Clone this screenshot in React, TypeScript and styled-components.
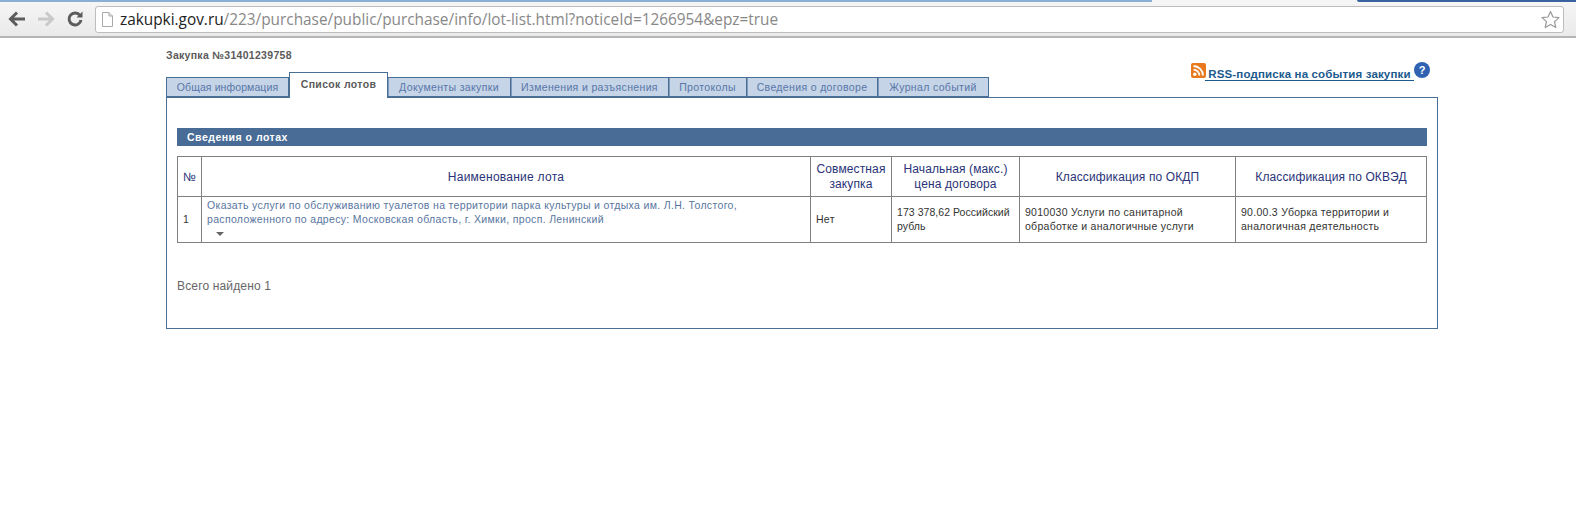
import React from 'react';
import styled, { createGlobalStyle } from 'styled-components';

const Global = createGlobalStyle`
  html, body { margin: 0; padding: 0; background: #fff; }
  body { font-family: "Liberation Sans", Arial, sans-serif; font-size: 12px; color: #555; }
`;

const Page = styled.div`
  width: 1576px;
  height: 529px;
  overflow: hidden;
  background: #fff;
`;

const BrowserChrome = styled.div`
  height: 38px;
  box-sizing: border-box;
  border-bottom: 2px solid #b5b5b5;
  background: linear-gradient(#f6f6f6, #eaeaea);
  display: flex;
  flex-direction: column;
`;

const TopStripe = styled.div`
  height: 2px;
  flex: none;
  display: flex;
  justify-content: space-between;
`;

const StripeTab = styled.div`
  width: 1152px;
  background: #8aaed6;
`;

const StripeActive = styled.div`
  width: 219px;
  background: #3a62a0;
  border-bottom-left-radius: 2px;
`;

const Toolbar = styled.div`
  flex: 1;
  display: flex;
  align-items: center;
  padding: 0 12px 0 8px;
`;

const NavIcon = styled.svg`
  width: 18px;
  height: 18px;
  flex: none;
  margin-right: 11px;
`;

const AddressBox = styled.div`
  width: 1469px;
  height: 27px;
  box-sizing: border-box;
  border: 1px solid #bdbdbd;
  border-radius: 3px;
  background: #fff;
  display: flex;
  align-items: center;
  padding: 0 3px 0 5px;
  font-family: "Open Sans", sans-serif;
  font-size: 15.37px;
  white-space: nowrap;
`;

const Host = styled.span`
  color: #222;
  margin-left: 6px;
`;

const UrlPath = styled.span`
  color: #888;
  flex: 1;
`;

const Content = styled.div`
  margin-left: 166px;
  width: 1272px;
`;

const PurchaseTitle = styled.div`
  font-size: 10.5px;
  font-weight: bold;
  letter-spacing: 0.3px;
  color: #5a5a5a;
  padding-top: 11px;
  height: 23px;
  line-height: 12px;
`;

const TabRow = styled.div`
  display: flex;
  align-items: flex-end;
  height: 25px;
  position: relative;
  z-index: 1;
`;

const Tab = styled.div<{ $active?: boolean; $w: number }>`
  width: ${(p) => p.$w}px;
  box-sizing: border-box;
  flex: none;
  text-align: center;
  white-space: nowrap;
  font-size: 10.5px;
  letter-spacing: 0.35px;
  ${(p) =>
    p.$active
      ? `
    height: 26px;
    margin-bottom: -1px;
    background: #fff;
    border: 1px solid #4a6f97;
    border-bottom: 0;
    font-weight: bold;
    color: #5a5a5a;
    line-height: 22px;
  `
      : `
    height: 20px;
    background: #c5d4e6;
    border: 1px solid #4a6f97;
    border-left-width: 0;
    box-shadow: inset 1px 0 0 #7f9bbb;
    color: #5876a8;
    line-height: 19px;
  `}
`;

const FirstTab = styled(Tab)`
  border-left-width: 1px;
  letter-spacing: 0.1px;
  box-shadow: none;
`;

const RssLink = styled.div`
  margin-left: auto;
  margin-right: 8px;
  margin-top: -9px;
  align-self: flex-start;
  display: flex;
  align-items: flex-start;
`;

const RssText = styled.a`
  font-size: 11.5px;
  font-weight: bold;
  letter-spacing: 0.15px;
  color: #1c5a8e;
  text-decoration: underline;
  text-underline-offset: 2px;
  white-space: pre;
  line-height: 14px;
  margin: 4px 0 0 -1px;
`;

const IconSvg = styled.svg`
  flex: none;
  display: block;
`;

const HelpIcon = styled(IconSvg)`
  margin-top: -1px;
`;

const Panel = styled.div`
  height: 232px;
  box-sizing: border-box;
  border: 1px solid #4a6f97;
  padding: 30px 10px 0;
`;

const SectionBar = styled.div`
  height: 18px;
  background: #486c96;
  color: #fff;
  font-size: 10.5px;
  font-weight: bold;
  letter-spacing: 0.5px;
  line-height: 18px;
  padding-left: 10px;
`;

const LotTable = styled.table`
  width: 100%;
  margin-top: 10px;
  border-collapse: collapse;
  table-layout: fixed;
  color: #333;
`;

const HeadCell = styled.th<{ $w?: number }>`
  ${(p) => (p.$w ? `width: ${p.$w}px;` : '')}
  height: 40px;
  box-sizing: border-box;
  border: 1px solid #808080;
  font-weight: normal;
  font-size: 12px;
  letter-spacing: 0.12px;
  line-height: 15px;
  color: #2a3378;
  padding: 1px 4px 0;
  text-align: center;
`;

const NameHead = styled(HeadCell)`
  letter-spacing: 0.25px;
`;

const BodyCell = styled.td`
  box-sizing: border-box;
  height: 46px;
  border: 1px solid #808080;
  font-size: 10.5px;
  letter-spacing: 0.28px;
  line-height: 14px;
  color: #333;
  padding: 0 5px 1px;
  vertical-align: middle;
`;

const PriceCell = styled(BodyCell)`
  letter-spacing: 0.05px;
`;

const LotCell = styled(BodyCell)`
  vertical-align: top;
  padding-top: 1px;
  padding-bottom: 0;
`;

const LotLink = styled.a`
  display: block;
  color: #5876a0;
  font-size: 10.5px;
  letter-spacing: 0.33px;
  line-height: 14px;
`;

const Caret = styled.div`
  width: 0;
  height: 0;
  margin: 6px 0 0 9px;
  border-left: 4px solid transparent;
  border-right: 4px solid transparent;
  border-top: 4px solid #666;
`;

const Total = styled.div`
  margin-top: 36px;
  font-size: 12px;
  letter-spacing: 0.15px;
  color: #666;
  line-height: 15px;
`;

const tabs: [string, number][] = [
  ['Документы закупки', 123],
  ['Изменения и разъяснения', 158],
  ['Протоколы', 78],
  ['Сведения о договоре', 131],
  ['Журнал событий', 111],
];

export default function App() {
  return (
    <Page>
      <Global />
      <BrowserChrome>
        <TopStripe>
          <StripeTab />
          <StripeActive />
        </TopStripe>
        <Toolbar>
          <NavIcon viewBox="0 0 18 18">
            <path d="M9 2.5 L2.5 9 L9 15.5 M3 9 H17" fill="none" stroke="#5c5c5c" strokeWidth="3" />
          </NavIcon>
          <NavIcon viewBox="0 0 18 18">
            <path d="M9 2.5 L15.5 9 L9 15.5 M15 9 H1" fill="none" stroke="#c9c9c9" strokeWidth="3" />
          </NavIcon>
          <NavIcon viewBox="0 0 18 18">
            <path d="M14 5.5 A6 6 0 1 0 15 10" fill="none" stroke="#5c5c5c" strokeWidth="3" />
            <path d="M10.5 7.5 H16.5 V1.5 Z" fill="#5c5c5c" />
          </NavIcon>
          <AddressBox>
            <svg width="13" height="15" viewBox="0 0 13 15">
              <path d="M1.5 .5 H8 L11.5 4 V14.5 H1.5 Z" fill="#fff" stroke="#aaa" />
              <path d="M8 .5 V4 H11.5" fill="#e6e6e6" stroke="#aaa" />
            </svg>
            <Host>zakupki.gov.ru</Host>
            <UrlPath>/223/purchase/public/purchase/info/lot-list.html?noticeId=1266954&amp;epz=true</UrlPath>
            <svg width="19" height="19" viewBox="0 0 19 19">
              <path d="M9.5 1.5 L12 7 L18 7.6 L13.5 11.6 L14.8 17.5 L9.5 14.5 L4.2 17.5 L5.5 11.6 L1 7.6 L7 7 Z" fill="#fff" stroke="#999" strokeWidth="1.2" strokeLinejoin="round" />
            </svg>
          </AddressBox>
        </Toolbar>
      </BrowserChrome>
      <Content>
        <PurchaseTitle>Закупка №31401239758</PurchaseTitle>
        <TabRow>
          <FirstTab $w={123}>Общая информация</FirstTab>
          <Tab $active $w={99}>Список лотов</Tab>
          {tabs.map(([t, w]) => (
            <Tab key={t} $w={w}>{t}</Tab>
          ))}
          <RssLink>
            <IconSvg width="15" height="15" viewBox="0 0 15 15">
              <rect width="15" height="15" rx="2" fill="#e8791f" />
              <circle cx="3.8" cy="11.2" r="1.7" fill="#fff" />
              <path d="M2.5 6.6 A6 6 0 0 1 8.4 12.5 M2.5 3 A9.6 9.6 0 0 1 12 12.5" fill="none" stroke="#fff" strokeWidth="1.8" />
            </IconSvg>
            <RssText>{' RSS-подписка на события закупки '}</RssText>
            <HelpIcon width="16" height="16" viewBox="0 0 16 16">
              <circle cx="8" cy="8" r="8" fill="#2f62b0" />
              <text x="8" y="12" textAnchor="middle" fontFamily="Liberation Sans" fontWeight="bold" fontSize="11" fill="#fff">?</text>
            </HelpIcon>
          </RssLink>
        </TabRow>
        <Panel>
          <SectionBar>Сведения о лотах</SectionBar>
          <LotTable>
            <thead>
              <tr>
                <HeadCell $w={24}>№</HeadCell>
                <NameHead>Наименование лота</NameHead>
                <HeadCell $w={81}>Совместная закупка</HeadCell>
                <HeadCell $w={128}>Начальная (макс.) цена договора</HeadCell>
                <HeadCell $w={216}>Классификация по ОКДП</HeadCell>
                <HeadCell $w={191}>Классификация по ОКВЭД</HeadCell>
              </tr>
            </thead>
            <tbody>
              <tr>
                <BodyCell>1</BodyCell>
                <LotCell>
                  <LotLink>
                    Оказать услуги по обслуживанию туалетов на территории парка культуры и отдыха им. Л.Н. Толстого, расположенного по адресу: Московская область, г. Химки, просп. Ленинский
                  </LotLink>
                  <Caret />
                </LotCell>
                <BodyCell>Нет</BodyCell>
                <PriceCell>173 378,62 Российский рубль</PriceCell>
                <BodyCell>9010030 Услуги по санитарной обработке и аналогичные услуги</BodyCell>
                <BodyCell>90.00.3 Уборка территории и аналогичная деятельность</BodyCell>
              </tr>
            </tbody>
          </LotTable>
          <Total>Всего найдено 1</Total>
        </Panel>
      </Content>
    </Page>
  );
}
